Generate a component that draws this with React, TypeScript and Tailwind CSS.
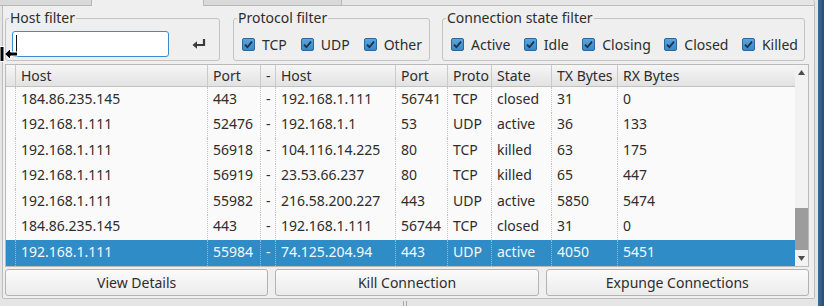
import React from 'react';

const cols = [
  { label: 'Host', w: 'w-[192px]' },
  { label: 'Port', w: 'w-[53px]' },
  { label: '-', w: 'w-[15px]' },
  { label: 'Host', w: 'w-[120px]' },
  { label: 'Port', w: 'w-[52px]' },
  { label: 'Proto', w: 'w-[44px]' },
  { label: 'State', w: 'w-[60px]' },
  { label: 'TX Bytes', w: 'w-[66px]' },
  { label: 'RX Bytes', w: 'flex-1' },
];

const rows = [
  ['184.86.235.145', '443', '-', '192.168.1.111', '56741', 'TCP', 'closed', '31', '0'],
  ['192.168.1.111', '52476', '-', '192.168.1.1', '53', 'UDP', 'active', '36', '133'],
  ['192.168.1.111', '56918', '-', '104.116.14.225', '80', 'TCP', 'killed', '63', '175'],
  ['192.168.1.111', '56919', '-', '23.53.66.237', '80', 'TCP', 'killed', '65', '447'],
  ['192.168.1.111', '55982', '-', '216.58.200.227', '443', 'UDP', 'active', '5850', '5474'],
  ['184.86.235.145', '443', '-', '192.168.1.111', '56744', 'TCP', 'closed', '31', '0'],
  ['192.168.1.111', '55984', '-', '74.125.204.94', '443', 'UDP', 'active', '4050', '5451'],
];

function CheckBox({ label }: { label: string }) {
  return (
    <div className="flex items-center gap-[7px]">
      <svg width="13" height="13" viewBox="0 0 13 13">
        <defs>
          <linearGradient id="cbg" x1="0" y1="0" x2="0" y2="1">
            <stop offset="0" stopColor="#5ba7de" />
            <stop offset="1" stopColor="#3587c7" />
          </linearGradient>
        </defs>
        <rect x="0.5" y="0.5" width="12" height="12" rx="1.5" fill="url(#cbg)" stroke="#2b679b" />
        <path d="M3 6.6 L5.4 9.2 L10 3.6" fill="none" stroke="#1d3148" strokeWidth="1.8" />
      </svg>
      <span>{label}</span>
    </div>
  );
}

function GroupBox({ title, className, children }: { title: string; className: string; children: React.ReactNode }) {
  return (
    <fieldset className={`border border-[#c3c3c3] rounded-[3px] px-[3px] shrink-0 ${className}`}>
      <legend className="px-[1px] leading-[18px]">{title}</legend>
      <div className="pt-[4px] pb-[3px] h-[33px] flex items-center">{children}</div>
    </fieldset>
  );
}

export default function App() {
  return (
    <div className="relative w-[824px] h-[306px] overflow-hidden flex bg-[#e5e5e5] text-[14px] text-[#2d2d2d] font-['Noto_Sans',sans-serif]">
      <div className="w-[818px] flex flex-col">
        {/* Tabs */}
        <div className="flex h-[6px] mr-[3px]">
          <div className="w-[92px] bg-[#d9d9d9] border-r border-b border-[#b8b8b8]" />
          <div className="w-[112px] bg-[#efefef] border-r border-[#b8b8b8]" />
          <div className="w-[138px] bg-[#d9d9d9] border-r border-b border-[#b8b8b8]" />
          <div className="flex-1 border-b border-[#bdbdbd] rounded-tr-[3px] border-r" />
        </div>

        {/* Pane */}
        <div className="ml-[2px] mr-[3px] h-[293px] bg-[#efefef] border-x border-b border-[#bdbdbd] rounded-b-[2px] pl-[2px] pr-[5px] pt-[3px] flex flex-col">
          {/* Filters */}
          <div className="flex items-start">
            <GroupBox title="Host filter" className="w-[215px]">
              <div className="ml-[3px] w-[157px] h-[26px] bg-white border border-[#3a8bd0] rounded-[3px] flex items-center pl-[3px]">
                <div className="w-[1px] h-[18px] bg-[#111]" />
              </div>
              <svg className="ml-[23px]" width="14" height="10" viewBox="0 0 14 10">
                <path d="M12 0 V6 H4" fill="none" stroke="#3a3a3a" strokeWidth="2.2" />
                <path d="M0.5 6 L5 2.2 V9.8 Z" fill="#3a3a3a" />
              </svg>
            </GroupBox>
            <GroupBox title="Protocol filter" className="w-[197px] ml-[13px]">
              <div className="flex-1 flex justify-between pl-[5px] pr-[4px]">
                <CheckBox label="TCP" />
                <CheckBox label="UDP" />
                <CheckBox label="Other" />
              </div>
            </GroupBox>
            <GroupBox title="Connection state filter" className="w-[363px] ml-[12px]">
              <div className="flex-1 flex justify-between pl-[5px] pr-[3px]">
                <CheckBox label="Active" />
                <CheckBox label="Idle" />
                <CheckBox label="Closing" />
                <CheckBox label="Closed" />
                <CheckBox label="Killed" />
              </div>
            </GroupBox>
          </div>

          {/* Table */}
          <div className="mt-[3px] h-[203px] border border-[#bababa] bg-[#fafafa] flex overflow-hidden">
            <div className="flex-1 flex flex-col min-w-0">
              <div className="flex h-[22px] shrink-0 border-b border-[#c2c2c2] bg-linear-to-b from-[#f6f6f6] to-[#e2e2e2]">
                <div className="w-[10px] shrink-0 border-r border-[#cacaca]" />
                {cols.map((c, i) => (
                  <div
                    key={i}
                    className={`${c.w} shrink-0 pl-[5px] flex items-center whitespace-nowrap overflow-hidden ${
                      i < cols.length - 1 ? 'border-r border-[#cacaca]' : ''
                    }`}
                  >
                    {c.label}
                  </div>
                ))}
              </div>
              {rows.map((r, ri) => {
                const sel = ri === rows.length - 1;
                return (
                  <div
                    key={ri}
                    className={`flex h-[25.5px] shrink-0 ${sel ? 'bg-[#308cc6] text-[#f4f8fb]' : ''}`}
                  >
                    <div className={`w-[10px] shrink-0 border-r border-dotted ${sel ? 'border-[#8bbde0]' : 'border-[#c2c2c2]'}`} />
                    {r.map((v, ci) => (
                      <div
                        key={ci}
                        className={`${cols[ci].w} shrink-0 pl-[5px] pb-[3px] flex items-center whitespace-nowrap overflow-hidden ${
                          ci < r.length - 1
                            ? `border-r border-dotted ${sel ? 'border-[#8bbde0]' : 'border-[#c2c2c2]'}`
                            : ''
                        }`}
                      >
                        {v}
                      </div>
                    ))}
                  </div>
                );
              })}
            </div>

            {/* Scrollbar */}
            <div className="w-[13px] shrink-0 bg-[#f2f2f2] flex flex-col">
              <div className="h-[15px] flex items-center justify-center">
                <svg width="7" height="5" viewBox="0 0 7 5">
                  <path d="M3.5 0 L7 5 H0 Z" fill="#4d4d4d" />
                </svg>
              </div>
              <div className="flex-1 flex flex-col justify-end">
                <div className="h-[42px] bg-[#9c9c9c]" />
              </div>
              <div className="h-[16px] flex items-center justify-center">
                <svg width="7" height="5" viewBox="0 0 7 5">
                  <path d="M0 0 H7 L3.5 5 Z" fill="#4d4d4d" />
                </svg>
              </div>
            </div>
          </div>

          {/* Buttons */}
          <div className="mt-[2px] h-[27px] flex gap-[7px]">
            {['View Details', 'Kill Connection', 'Expunge Connections'].map((b) => (
              <button
                key={b}
                className="flex-1 border border-[#b3b3b3] rounded-[3px] bg-linear-to-b from-[#fbfbfb] to-[#ebebeb] text-[#2d2d2d]"
              >
                {b}
              </button>
            ))}
          </div>
        </div>

        {/* Splitter grip */}
        <div className="flex-1 flex justify-center items-end pr-[8px]">
          <div className="flex gap-[2px] h-[5px]">
            <div className="w-[1px] bg-[#a9a9a9]" />
            <div className="w-[1px] bg-[#a9a9a9]" />
          </div>
        </div>
      </div>

      {/* Window border */}
      <div className="w-[6px] bg-linear-to-r from-[#3a6d96] to-[#1f4f7a]" />

      {/* Mouse cursor */}
      <svg className="absolute left-0 top-[46px]" width="20" height="16" viewBox="0 0 20 16">
        <rect x="0" y="0.5" width="4" height="15" fill="#000" stroke="#fff" strokeWidth="1" />
        <path d="M4.5 8 L10.5 2.5 V6 H17.5 V10 H10.5 V13.5 Z" fill="#000" stroke="#fff" strokeWidth="1" />
      </svg>
    </div>
  );
}
